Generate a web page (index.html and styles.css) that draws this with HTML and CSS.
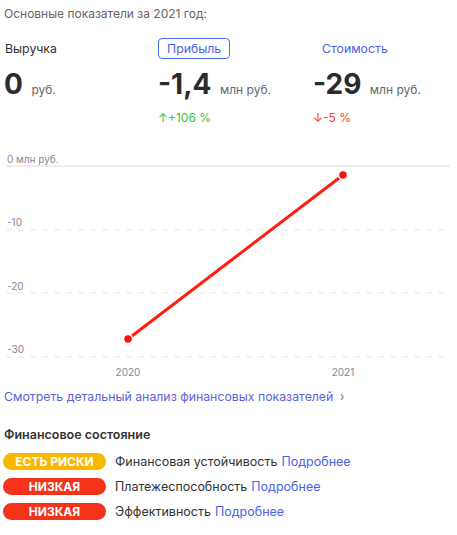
FILE: index.html
```html
<!DOCTYPE html>
<html lang="ru">
<head>
<meta charset="UTF-8">
<meta name="viewport" content="width=device-width, initial-scale=1.0">
<title>Основные показатели</title>
<link rel="stylesheet" href="styles.css">
</head>
<body>
<div class="page">
    <p class="title">Основные показатели за 2021 год:</p>

    <div class="stats">
        <div class="stat">
            <span class="stat-label plain">Выручка</span>
            <div class="stat-value"><b>0</b> <span>руб.</span></div>
        </div>
        <div class="stat">
            <span class="stat-label active">Прибыль</span>
            <div class="stat-value"><b>-1,4</b> <span>млн руб.</span></div>
            <div class="change up">↑+106 %</div>
        </div>
        <div class="stat">
            <span class="stat-label">Стоимость</span>
            <div class="stat-value"><b>-29</b> <span>млн руб.</span></div>
            <div class="change down">↓-5 %</div>
        </div>
    </div>

    <svg class="chart" viewBox="0 0 449 235" width="449" height="235">
        <line x1="2" y1="19" x2="446" y2="19" class="axis"/>
        <line x1="2" y1="83" x2="446" y2="83" class="grid"/>
        <line x1="2" y1="146" x2="446" y2="146" class="grid"/>
        <line x1="2" y1="210" x2="446" y2="210" class="grid"/>
        <text x="3" y="16">0 млн руб.</text>
        <text x="3" y="79">-10</text>
        <text x="3" y="143">-20</text>
        <text x="3" y="206">-30</text>
        <text x="124" y="229" text-anchor="middle">2020</text>
        <text x="339" y="229" text-anchor="middle">2021</text>
        <line x1="124" y1="192" x2="339" y2="28" class="series"/>
        <circle cx="124" cy="192" r="4.5" class="dot"/>
        <circle cx="339" cy="28" r="4.5" class="dot"/>
    </svg>

    <a href="#" class="more">Смотреть детальный анализ финансовых показателей <span class="chev">›</span></a>

    <h3>Финансовое состояние</h3>
    <ul class="status">
        <li><span class="badge warn">ЕСТЬ РИСКИ</span> Финансовая устойчивость <a href="#">Подробнее</a></li>
        <li><span class="badge bad">НИЗКАЯ</span> Платежеспособность <a href="#">Подробнее</a></li>
        <li><span class="badge bad">НИЗКАЯ</span> Эффективность <a href="#">Подробнее</a></li>
    </ul>
</div>
</body>
</html>
```
FILE: styles.css
```css
body {
    margin: 0;
    padding: 0 4px;
    font-family: Inter, "Noto Sans", sans-serif;
    color: #333;
    background-color: #fff;
}
.page {
    width: 449px;
}
.title {
    margin: 6px 0 0;
    font-size: 12px;
    line-height: 16px;
    color: #666;
}
.stats {
    display: grid;
    grid-template-columns: 154px 155px 1fr;
    margin-top: 15px;
}
.stat-label {
    display: inline-block;
    height: 21px;
    line-height: 19px;
    padding: 0 8px;
    border: 1px solid transparent;
    border-radius: 4px;
    font-size: 12.3px;
    color: #4b63e6;
    box-sizing: border-box;
}
.stat-label.plain {
    padding: 0;
    color: #333;
}
.stat-label.active {
    border-color: #4b6ef0;
}
.stat-value {
    margin-top: 9px;
    height: 32px;
    line-height: 32px;
    white-space: nowrap;
}
.stat-value b {
    font-size: 28px;
    font-weight: 700;
    color: #2b2b2b;
    margin-right: 4px;
}
.stat-value span {
    font-size: 12px;
    color: #666;
}
.change {
    margin-top: 10px;
    font-size: 12px;
    line-height: 16px;
}
.change.up {
    color: #3cc23c;
}
.change.down {
    color: #f23b2c;
}
.chart {
    display: block;
    margin-top: 21px;
}
.chart text {
    font-size: 10px;
    fill: #888;
    font-family: Inter, "Noto Sans", sans-serif;
}
.chart .axis {
    stroke: #eee;
    stroke-width: 2;
}
.chart .grid {
    stroke: #e6e6e6;
    stroke-width: 1;
    stroke-dasharray: 6 6;
}
.chart .series {
    stroke: #ff1e10;
    stroke-width: 3;
}
.chart .dot {
    fill: #f5160c;
    stroke: #fff;
    stroke-width: 1.5;
}
.more {
    display: block;
    margin-top: 7px;
    font-size: 12.3px;
    line-height: 16px;
    color: #5a63e0;
    text-decoration: none;
}
.more .chev {
    margin-left: 3px;
    color: #777;
}
h3 {
    margin: 22px 0 0;
    font-size: 12.5px;
    line-height: 16px;
    font-weight: 600;
    color: #333;
}
.status {
    list-style: none;
    margin: 10px 0 0;
    padding: 0;
}
.status li {
    display: flex;
    align-items: center;
    gap: 4px;
    height: 17px;
    margin-bottom: 8px;
    font-size: 12.5px;
    color: #333;
}
.status a {
    color: #4b63e6;
    text-decoration: none;
}
.badge {
    width: 103px;
    height: 17px;
    line-height: 17px;
    margin-left: -1px;
    margin-right: 5px;
    border-radius: 9px;
    text-align: center;
    font-size: 12px;
    font-weight: 700;
    color: #fff;
}
.badge.warn {
    background-color: #f9b700;
}
.badge.bad {
    background-color: #f5331a;
}
```
